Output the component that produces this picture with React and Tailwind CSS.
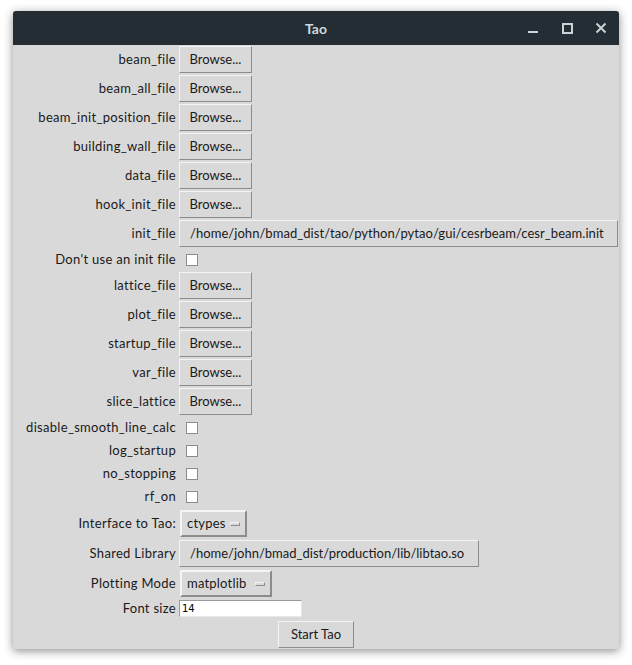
import React from "react";

const font = { fontFamily: "Lato, 'Open Sans', sans-serif" };

function Label({ children }) {
  return (
    <div className="flex items-center justify-end pr-[3px] text-[13px] tracking-[0.3px] text-[#1a1a1a] whitespace-nowrap">
      {children}
    </div>
  );
}

function Btn({ children, className = "" }) {
  return (
    <div
      className={
        "h-[27px] flex items-center border border-t-[#f4f4f4] border-l-[#f4f4f4] border-b-[#8c8c8c] border-r-[#8c8c8c] bg-[#d9d9d9] text-[13px] text-[#1a1a1a] whitespace-nowrap " +
        className
      }
    >
      {children}
    </div>
  );
}

function BrowseRow({ label }) {
  return (
    <div className="grid grid-cols-[166px_1fr] h-[29px]">
      <Label>{label}</Label>
      <div className="flex items-center">
        <Btn className="w-[73px] justify-center">Browse...</Btn>
      </div>
    </div>
  );
}

function CheckRow({ label }) {
  return (
    <div className="grid grid-cols-[166px_1fr] h-[23px]">
      <Label>{label}</Label>
      <div className="flex items-center">
        <div className="ml-[7px] w-[12px] h-[12px] bg-white border border-[#8c8c8c]" />
      </div>
    </div>
  );
}

function MenuBtn({ text, width }) {
  return (
    <div
      className={
        "h-[27px] flex items-center justify-between pl-[5px] pr-[5px] border-2 border-t-[#f4f4f4] border-l-[#f4f4f4] border-b-[#8c8c8c] border-r-[#8c8c8c] bg-[#d9d9d9] text-[13px] tracking-[0.2px] text-[#1a1a1a] " +
        width
      }
    >
      <span>{text}</span>
      <span className="w-[10px] h-[4px] border border-t-[#f4f4f4] border-l-[#f4f4f4] border-b-[#8c8c8c] border-r-[#8c8c8c]" />
    </div>
  );
}

export default function App() {
  return (
    <div className="w-[632px] h-[665px] bg-white overflow-hidden" style={font}>
      <div className="ml-[13px] mt-[11px] w-[606px] h-[638px] bg-[#d9d9d9] shadow-[0_2px_10px_rgba(0,0,0,0.45)] flex flex-col rounded-t-[3px]">
        {/* title bar */}
        <div className="relative h-[34px] bg-[#232d33] flex items-center justify-center rounded-t-[3px] shrink-0">
          <span className="text-[14px] font-bold text-[#cfd8dc]">Tao</span>
          <div className="absolute right-[1px] top-0 h-[34px] flex items-center">
            <svg width="34" height="34" viewBox="0 0 34 34">
              <rect x="12" y="20" width="10" height="2" fill="#c9d2d6" />
            </svg>
            <svg width="34" height="34" viewBox="0 0 34 34">
              <rect x="13" y="13" width="9" height="9" fill="none" stroke="#c9d2d6" strokeWidth="2" />
            </svg>
            <svg width="34" height="34" viewBox="0 0 34 34">
              <path d="M12.5 12.5 L21.5 21.5 M21.5 12.5 L12.5 21.5" stroke="#c9d2d6" strokeWidth="2" />
            </svg>
          </div>
        </div>
        {/* body */}
        <div className="flex flex-col">
          <BrowseRow label="beam_file" />
          <BrowseRow label="beam_all_file" />
          <BrowseRow label="beam_init_position_file" />
          <BrowseRow label="building_wall_file" />
          <BrowseRow label="data_file" />
          <BrowseRow label="hook_init_file" />
          <div className="grid grid-cols-[166px_1fr] h-[29px]">
            <Label>init_file</Label>
            <div className="flex items-center">
              <Btn className="w-[439px] pl-[10px] tracking-[0.05px]">/home/john/bmad_dist/tao/python/pytao/gui/cesrbeam/cesr_beam.init</Btn>
            </div>
          </div>
          <CheckRow label="Don't use an init file" />
          <BrowseRow label="lattice_file" />
          <BrowseRow label="plot_file" />
          <BrowseRow label="startup_file" />
          <BrowseRow label="var_file" />
          <BrowseRow label="slice_lattice" />
          <CheckRow label="disable_smooth_line_calc" />
          <CheckRow label="log_startup" />
          <CheckRow label="no_stopping" />
          <CheckRow label="rf_on" />
          <div className="grid grid-cols-[166px_1fr] h-[31px]">
            <Label>Interface to Tao:</Label>
            <div className="flex items-center pl-[1px]">
              <MenuBtn text="ctypes" width="w-[67px]" />
            </div>
          </div>
          <div className="grid grid-cols-[166px_1fr] h-[29px]">
            <Label>Shared Library</Label>
            <div className="flex items-center">
              <Btn className="w-[300px] pl-[10px]">/home/john/bmad_dist/production/lib/libtao.so</Btn>
            </div>
          </div>
          <div className="grid grid-cols-[166px_1fr] h-[31px]">
            <Label>Plotting Mode</Label>
            <div className="flex items-center pl-[1px]">
              <MenuBtn text="matplotlib" width="w-[92px]" />
            </div>
          </div>
          <div className="grid grid-cols-[166px_1fr] h-[19px]">
            <Label>Font size</Label>
            <div className="flex items-center">
              <div className="w-[123px] h-[17px] bg-white border border-t-[#9a9a9a] border-l-[#9a9a9a] border-b-[#e8e8e8] border-r-[#e8e8e8] flex items-center pl-[2px] text-[10px] text-black" style={{ fontFamily: "'DejaVu Sans', sans-serif" }}>
                14
              </div>
            </div>
          </div>
          <div className="h-[31px] flex items-center justify-center pt-[2px]">
            <Btn className="w-[76px] justify-center">Start Tao</Btn>
          </div>
        </div>
      </div>
    </div>
  );
}
